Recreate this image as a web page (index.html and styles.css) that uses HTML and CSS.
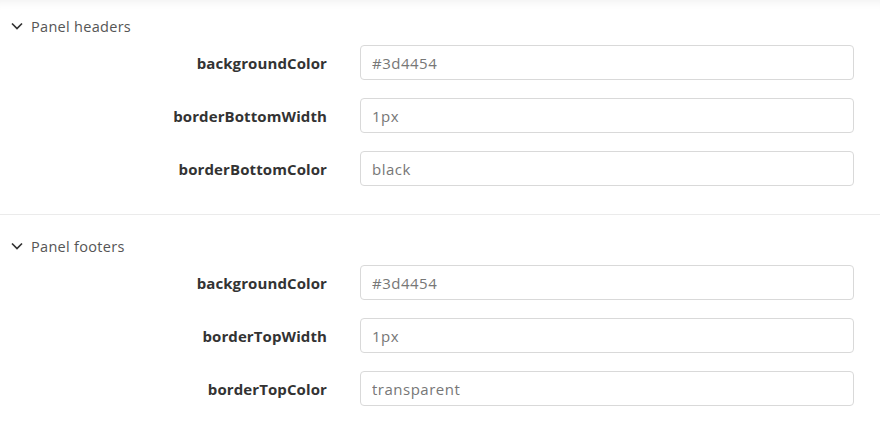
FILE: index.html
```html
<!DOCTYPE html>
<html>
<head>
<meta charset="utf-8">
<link rel="stylesheet" href="styles.css">
</head>
<body>
<div class="page">
  <section class="group first">
    <div class="group-header">
      <svg class="chev" width="12" height="8" viewBox="0 0 12 8"><polyline points="1,1.5 6,6.5 11,1.5" fill="none" stroke="#333" stroke-width="1.7"/></svg>
      <span>Panel headers</span>
    </div>
    <div class="rows">
      <label class="row"><span class="label">backgroundColor</span><input class="field" value="#3d4454"></label>
      <label class="row"><span class="label">borderBottomWidth</span><input class="field" value="1px"></label>
      <label class="row"><span class="label">borderBottomColor</span><input class="field" value="black"></label>
    </div>
  </section>
  <section class="group">
    <div class="group-header">
      <svg class="chev" width="12" height="8" viewBox="0 0 12 8"><polyline points="1,1.5 6,6.5 11,1.5" fill="none" stroke="#333" stroke-width="1.7"/></svg>
      <span>Panel footers</span>
    </div>
    <div class="rows">
      <label class="row"><span class="label">backgroundColor</span><input class="field" value="#3d4454"></label>
      <label class="row"><span class="label">borderTopWidth</span><input class="field" value="1px"></label>
      <label class="row"><span class="label">borderTopColor</span><input class="field" value="transparent"></label>
    </div>
  </section>
</div>
</body>
</html>
```

FILE: styles.css
```css
html, body {
  margin: 0;
  padding: 0;
  background: #fff;
}
body {
  font-family: "Open Sans", "Liberation Sans", sans-serif;
  color: #333;
}
.page {
  width: 880px;
  height: 424px;
  overflow: hidden;
  box-shadow: inset 0 10px 10px -8px rgba(0, 0, 0, 0.06);
}
.group {
  padding: 21px 0 28px;
  border-bottom: 1px solid #ebebeb;
}
.group.first {
  padding-top: 16px;
}
.group-header {
  display: flex;
  align-items: center;
  height: 20px;
  padding-left: 11px;
  gap: 8px;
  font-size: 14.5px;
  letter-spacing: 0.3px;
  color: #555;
  margin-bottom: 9px;
}
.chev {
  display: block;
}
.rows {
  display: flex;
  flex-direction: column;
  gap: 18px;
}
.row {
  display: grid;
  grid-template-columns: 327px 494px;
  column-gap: 33px;
  align-items: center;
}
.label {
  text-align: right;
  font-weight: 700;
  font-size: 15px;
  letter-spacing: 0.1px;
  color: #333;
}
.field {
  box-sizing: border-box;
  height: 35px;
  width: 494px;
  border: 1px solid #d9d9d9;
  border-radius: 4px;
  padding: 0 11px;
  font-family: inherit;
  font-size: 15px;
  letter-spacing: 0.5px;
  color: #777;
  background: #fff;
  outline: none;
}
```
